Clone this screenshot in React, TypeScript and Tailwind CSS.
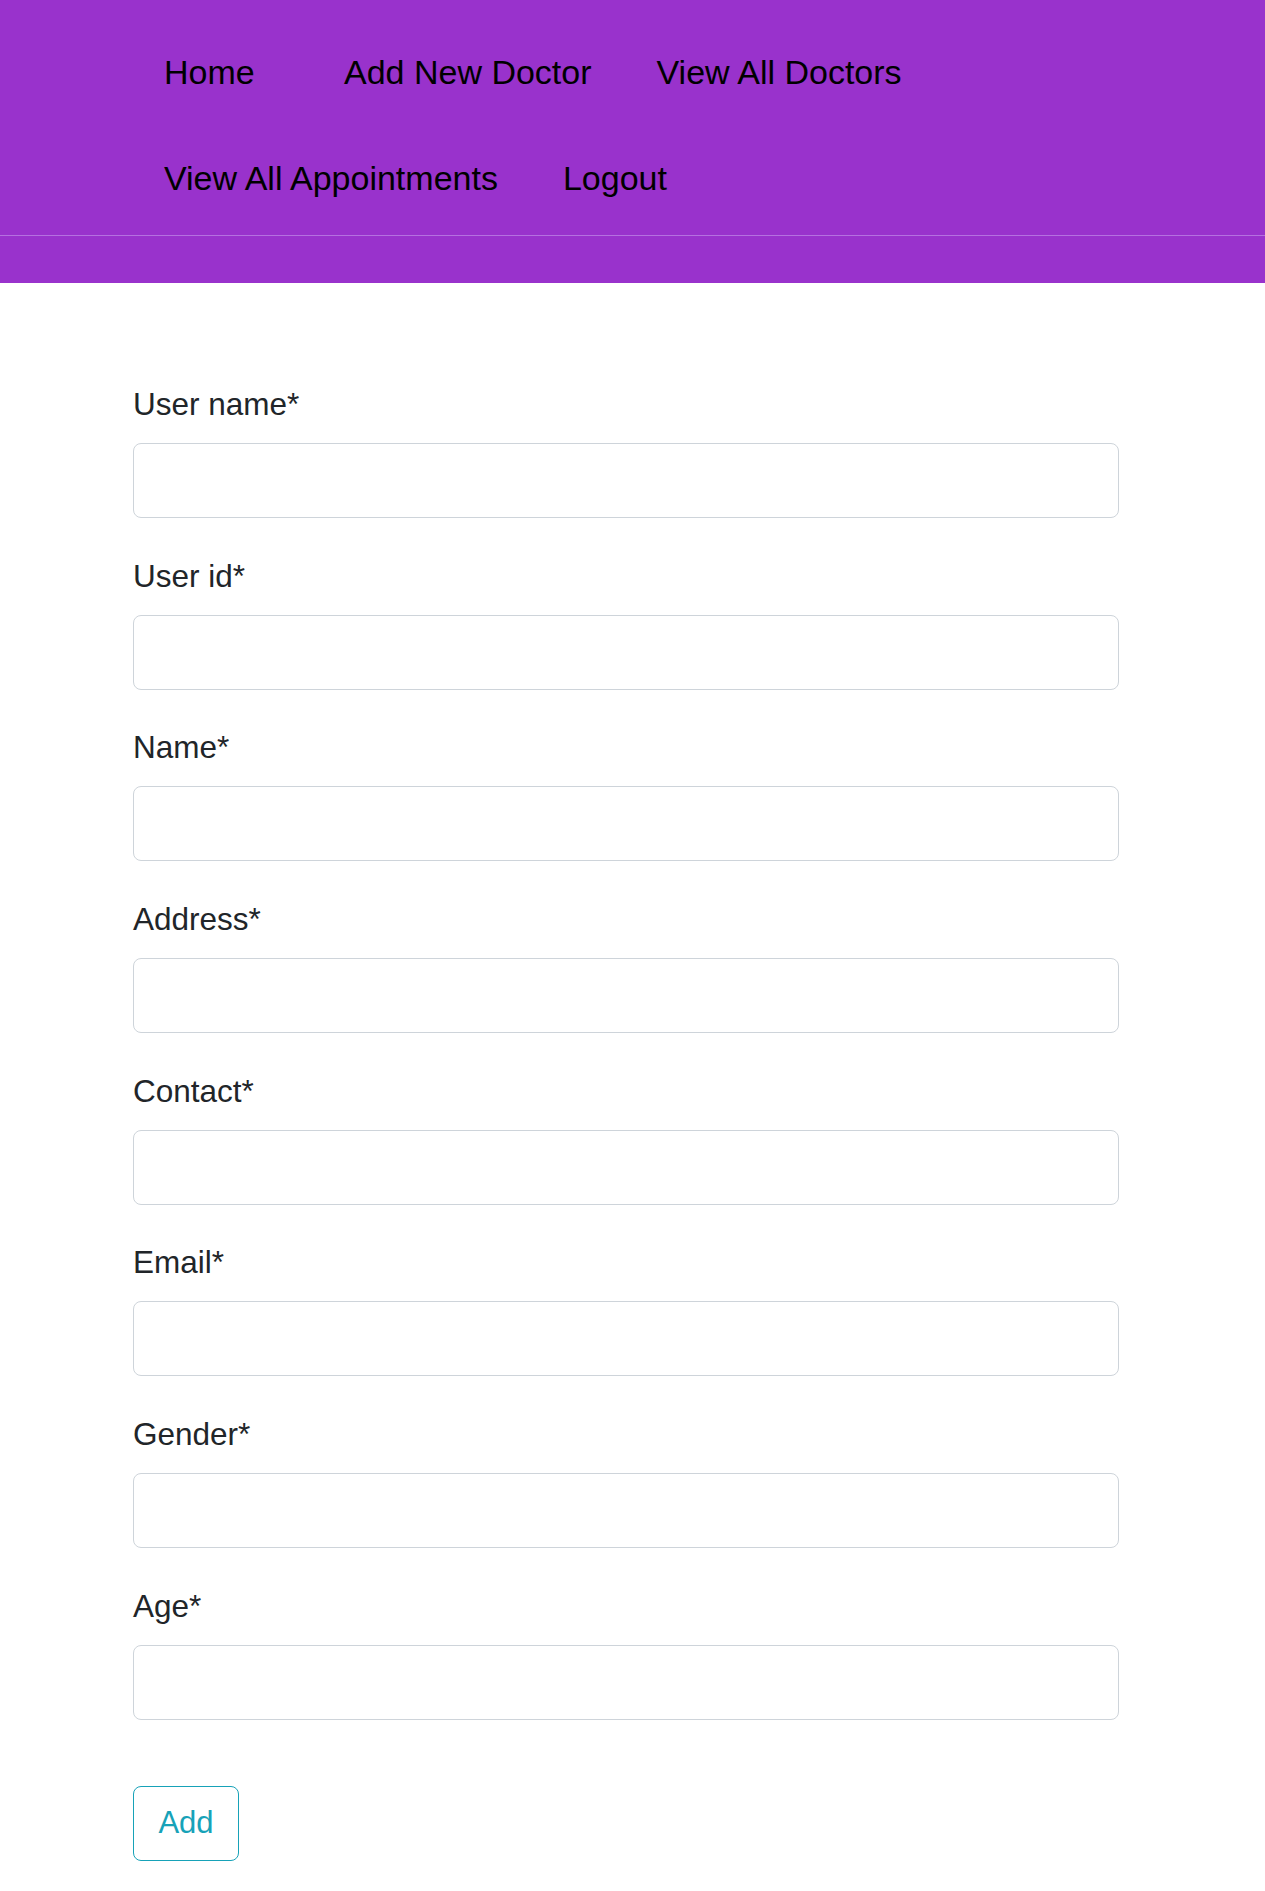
const fields = ['User name*', 'User id*', 'Name*', 'Address*', 'Contact*', 'Email*', 'Gender*', 'Age*']

const NavLink = ({ label, className = '' }: { label: string; className?: string }) => (
    <a href="#" className={`block whitespace-nowrap text-black text-[34px] leading-[106px] ${className}`}>
        {label}
    </a>
)

const Header = () => (
    <header className="bg-[#9932cc]">
        <nav className="pt-[19px] pb-[4px] pl-[164px] border-b border-[#b570e0]">
            <div className="flex gap-[65px]">
                <NavLink label="Home" className="w-[115px]" />
                <NavLink label="Add New Doctor" />
                <NavLink label="View All Doctors" />
            </div>
            <div className="flex gap-[65px]">
                <NavLink label="View All Appointments" />
                <NavLink label="Logout" />
            </div>
        </nav>
        <div className="h-[47px]" />
    </header>
)

const Field = ({ label }: { label: string }) => (
    <div className="mb-[34.7px]">
        <label className="block mb-[16px] text-[31.5px] leading-[46px] text-[#212529]">{label}</label>
        <input
            type="text"
            className="block w-full h-[75px] rounded-[8px] border-[1.5px] border-[#ced4da] bg-white px-4 text-[31px] outline-none"
        />
    </div>
)

export default function App() {
    return (
        <div className="min-h-[1891px] bg-white" style={{ fontFamily: '"Liberation Sans", Arial, sans-serif' }}>
            <Header />
            <form className="pt-[98px] pl-[133px] w-[1119px]" onSubmit={e => e.preventDefault()}>
                {fields.map(f => <Field key={f} label={f} />)}
                <button
                    type="submit"
                    className="mt-[31px] h-[75px] w-[106px] rounded-[8px] border-[1.5px] border-[#17a2b8] text-[31px] text-[#17a2b8] bg-white"
                >
                    Add
                </button>
            </form>
        </div>
    )
}
